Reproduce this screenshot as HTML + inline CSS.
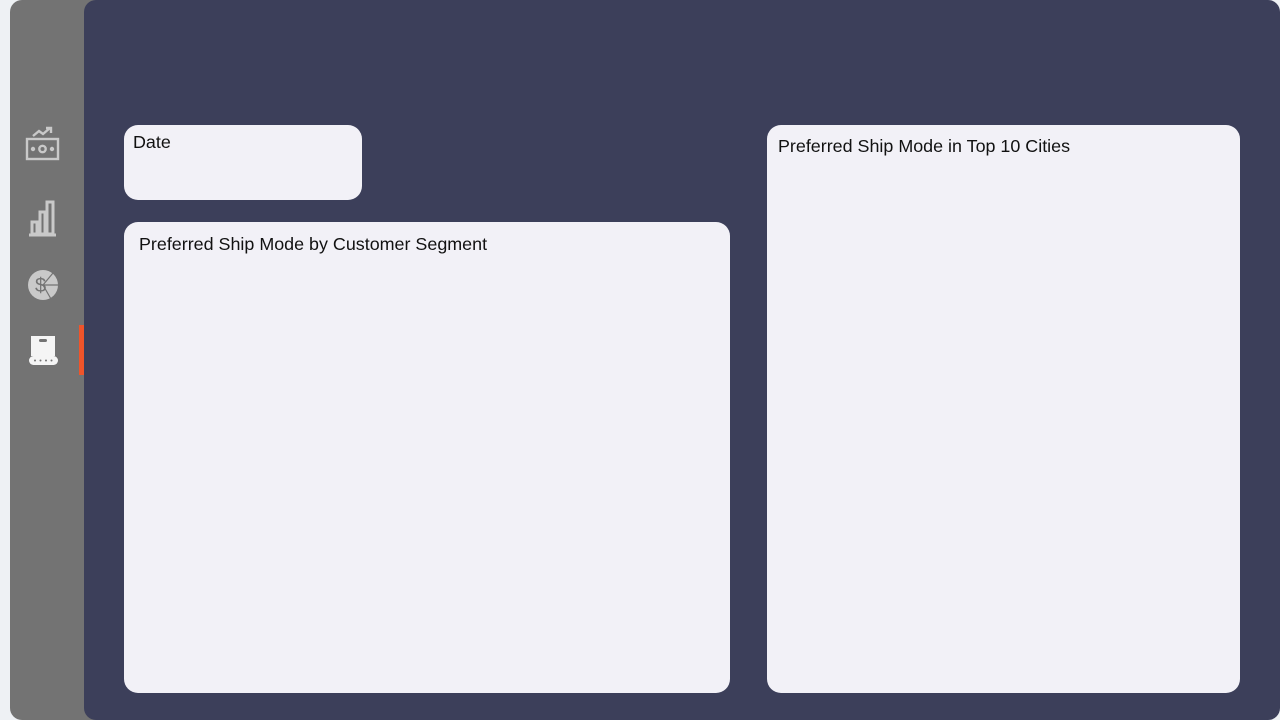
<!DOCTYPE html>
<html><head><style>
*{margin:0;padding:0;box-sizing:border-box}
body{width:1280px;height:720px;background:#eef1f4;position:relative;overflow:hidden;font-family:"Liberation Sans",sans-serif}
.side{position:absolute;left:10px;top:0;width:90px;height:720px;background:#737373;border-radius:12px 0 0 12px}
.main{position:absolute;left:84px;top:0;width:1196px;height:720px;background:#3c3f5a;border-radius:12px}
.card{position:absolute;background:#f2f1f7;border-radius:14px;color:#111;font-size:17.9px}
.bar{position:absolute;left:79px;top:325px;width:5px;height:50px;background:#f0542a}
svg{position:absolute}
</style></head><body>
<div class="side"></div>
<div class="main"></div>
<div class="bar"></div>
<svg style="left:24px;top:126px" width="36" height="36" viewBox="0 0 36 36" fill="none" stroke="#c9c9c9" stroke-width="2.4">
<rect x="3" y="13" width="31" height="20"/><circle cx="18.5" cy="23" r="3.2"/><circle cx="9" cy="23" r="1" fill="#c9c9c9"/><circle cx="28" cy="23" r="1" fill="#c9c9c9"/>
<path d="M9 10l6-5 4 3 7-6M22 2h5v5"/></svg>
<svg style="left:27px;top:198px" width="30" height="40" viewBox="0 0 30 40" fill="none" stroke="#c9c9c9" stroke-width="3">
<rect x="5" y="24" width="5" height="12"/><rect x="13" y="14" width="5" height="22"/><rect x="20" y="4" width="6" height="32"/><path d="M2 37h27"/></svg>
<svg style="left:27px;top:269px" width="32" height="32" viewBox="0 0 32 32">
<circle cx="16" cy="16" r="15" fill="#c9c9c9"/><path d="M16 16L26 4M16 16h15M16 16l8 14" stroke="#737373" stroke-width="1.2"/>
<text x="8" y="23" font-size="20" fill="#737373" font-family="Liberation Sans">$</text></svg>
<svg style="left:28px;top:334px" width="32" height="34" viewBox="0 0 32 34">
<rect x="3" y="2" width="24" height="20" fill="#f5f5f5"/><rect x="11" y="5" width="8" height="3" rx="1.5" fill="#737373"/>
<rect x="1" y="22" width="29" height="9" rx="4.5" fill="#f5f5f5"/>
<g fill="#737373"><circle cx="7" cy="26.5" r="1"/><circle cx="12.5" cy="26.5" r="1"/><circle cx="18" cy="26.5" r="1"/><circle cx="23.5" cy="26.5" r="1"/></g></svg>
<div class="card" style="left:124px;top:125px;width:238px;height:75px;padding:7px 9px">Date</div>
<div class="card" style="left:124px;top:222px;width:606px;height:471px;padding:12px 15px">Preferred Ship Mode by Customer Segment</div>
<div class="card" style="left:767px;top:125px;width:473px;height:568px;padding:11px 11px">Preferred Ship Mode in Top 10 Cities</div>
</body></html>
